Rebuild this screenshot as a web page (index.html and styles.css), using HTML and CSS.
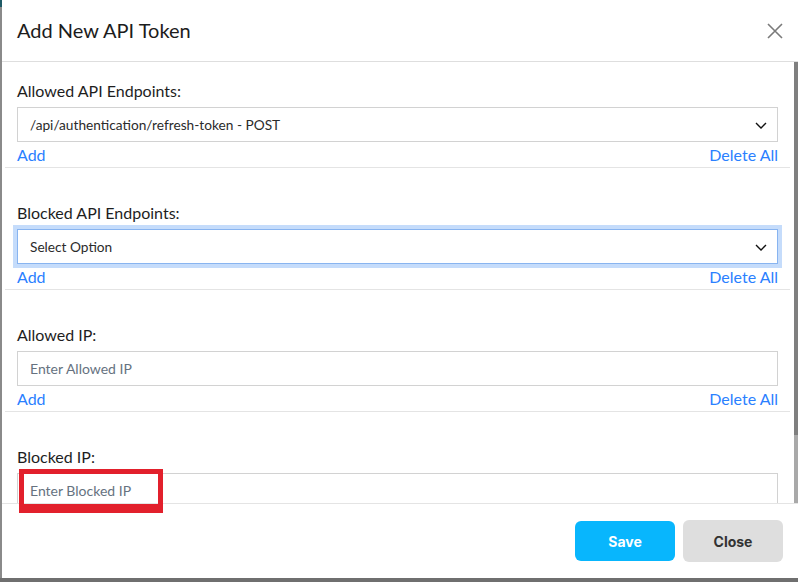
FILE: index.html
```html
<!DOCTYPE html>
<html lang="en">
<head>
  <meta charset="UTF-8" />
  <meta name="viewport" content="width=device-width, initial-scale=1.0"/>
  <title>Add New API Token</title>
  <link rel="stylesheet" href="styles.css">
</head>
<body>

  <div class="modal">
    <div class="modal-header">
      <h2 class="modal-title">Add New API Token</h2>
      <button class="close-x" aria-label="Close">
        <svg width="16" height="16" viewBox="0 0 16 16"><path d="M1 1L15 15M15 1L1 15" stroke="#7a7a7a" stroke-width="1.6" fill="none"/></svg>
      </button>
    </div>

    <div class="modal-body">
      <div class="body-content">
        <!-- Allowed endpoints -->
        <div class="field-group">
          <label class="field-label">Allowed API Endpoints:</label>
          <div class="select-wrap">
            <select class="field-select">
              <option>/api/authentication/refresh-token - POST</option>
            </select>
            <svg class="chevron" width="12" height="7" viewBox="0 0 12 7"><path d="M1 1L6 6L11 1" stroke="#111" stroke-width="1.4" fill="none"/></svg>
          </div>
          <div class="field-actions">
            <a href="#">Add</a>
            <a href="#">Delete All</a>
          </div>
        </div>

        <!-- Blocked endpoints -->
        <div class="field-group">
          <label class="field-label">Blocked API Endpoints:</label>
          <div class="select-wrap">
            <select class="field-select is-focused">
              <option>Select Option</option>
            </select>
            <svg class="chevron" width="12" height="7" viewBox="0 0 12 7"><path d="M1 1L6 6L11 1" stroke="#111" stroke-width="1.4" fill="none"/></svg>
          </div>
          <div class="field-actions">
            <a href="#">Add</a>
            <a href="#">Delete All</a>
          </div>
        </div>

        <!-- Allowed IP -->
        <div class="field-group">
          <label class="field-label">Allowed IP:</label>
          <input type="text" class="field-input" placeholder="Enter Allowed IP" />
          <div class="field-actions">
            <a href="#">Add</a>
            <a href="#">Delete All</a>
          </div>
        </div>

        <!-- Blocked IP -->
        <div class="field-group">
          <label class="field-label">Blocked IP:</label>
          <input type="text" class="field-input" placeholder="Enter Blocked IP" />
          <div class="field-actions">
            <a href="#">Add</a>
            <a href="#">Delete All</a>
          </div>
        </div>
      </div>

      <div class="scrollbar"><div class="scrollbar-thumb"></div></div>
    </div>

    <div class="modal-footer">
      <button class="btn btn-save">Save</button>
      <button class="btn btn-close">Close</button>
    </div>
  </div>

  <!-- review marker -->
  <div class="highlight"></div>

</body>
</html>
```

FILE: styles.css
```css
/* Page backdrop */
body {
  margin: 0;
  height: 582px;
  background: #8a8a8a;
  font-family: 'Lato', 'Open Sans', sans-serif;
  position: relative;
  overflow: hidden;
}

body::before {
  content: "";
  position: absolute;
  top: 0;
  left: 0;
  width: 2px;
  height: 7px;
  background: #1f5a66;
}

body::after {
  content: "";
  position: absolute;
  left: 0;
  right: 0;
  bottom: 0;
  height: 4px;
  background: #6f6f6f;
}

/* Modal */
.modal {
  margin-left: 2px;
  height: 578px;
  background: #fff;
  display: flex;
  flex-direction: column;
}

.modal-header {
  height: 61px;
  flex-shrink: 0;
  display: flex;
  align-items: center;
  justify-content: space-between;
  padding: 0 15px;
  border-bottom: 1px solid #dedede;
}

.modal-title {
  margin: 0 0 1px;
  font-size: 20px;
  font-weight: 400;
  color: #1c1c1c;
}

.close-x {
  border: none;
  background: none;
  padding: 0;
  width: 16px;
  height: 16px;
  cursor: pointer;
  display: flex;
}

/* Body with its scrollbar */
.modal-body {
  flex: 1;
  min-height: 0;
  display: flex;
}

.body-content {
  flex: 1;
  overflow: hidden;
}

.scrollbar {
  width: 4px;
  background: #a9a9a9;
}

.scrollbar-thumb {
  height: 373px;
  background: #7f7f7f;
}

.field-group {
  margin: 0 4px 0 3px;
  padding: 19px 12px 1px;
  border-bottom: 1px solid #e4e4e4;
}

.field-group + .field-group {
  padding-top: 35px;
}

.field-label {
  display: block;
  font-size: 16px;
  line-height: 19px;
  color: #1e1e1e;
  margin-bottom: 7px;
}

.select-wrap {
  position: relative;
}

.field-select,
.field-input {
  display: block;
  width: 100%;
  height: 35px;
  box-sizing: border-box;
  border: 1px solid #d2d2d2;
  border-radius: 0;
  padding: 0 12px;
  font-family: 'Lato', sans-serif;
  font-size: 13.7px;
  color: #2b2b2b;
  background: #fff;
  outline: none;
}

.field-input {
  font-size: 14px;
}

.field-select {
  appearance: none;
  -webkit-appearance: none;
}

.field-select.is-focused {
  border-color: #88b4f0;
  box-shadow: 0 0 0 4px #c5dcfb;
}

.field-input::placeholder {
  color: #66727f;
}

.chevron {
  position: absolute;
  right: 11px;
  top: 15px;
  pointer-events: none;
}

.field-actions {
  display: flex;
  justify-content: space-between;
  margin-top: 2px;
  line-height: 22px;
  font-size: 16px;
}

.field-actions a {
  color: #2a80ff;
  text-decoration: none;
}

/* Footer buttons */
.modal-footer {
  height: 74px;
  flex-shrink: 0;
  border-top: 1px solid #e4e4e4;
  display: flex;
  align-items: center;
  justify-content: flex-end;
  gap: 8px;
  padding-right: 15px;
}

.btn {
  width: 100px;
  border: none;
  border-radius: 6px;
  font-family: 'Inter', sans-serif;
  font-size: 14px;
  font-weight: 700;
  cursor: pointer;
}

.btn-save {
  height: 40px;
  background: #08b6fd;
  color: #fff;
}

.btn-close {
  height: 42px;
  background: #dedede;
  color: #333;
}

/* Red review box drawn over the blocked IP field */
.highlight {
  position: absolute;
  left: 19px;
  top: 469px;
  width: 144px;
  height: 44px;
  box-sizing: border-box;
  border: 5px solid #e2202c;
  border-bottom-width: 9px;
}
```
